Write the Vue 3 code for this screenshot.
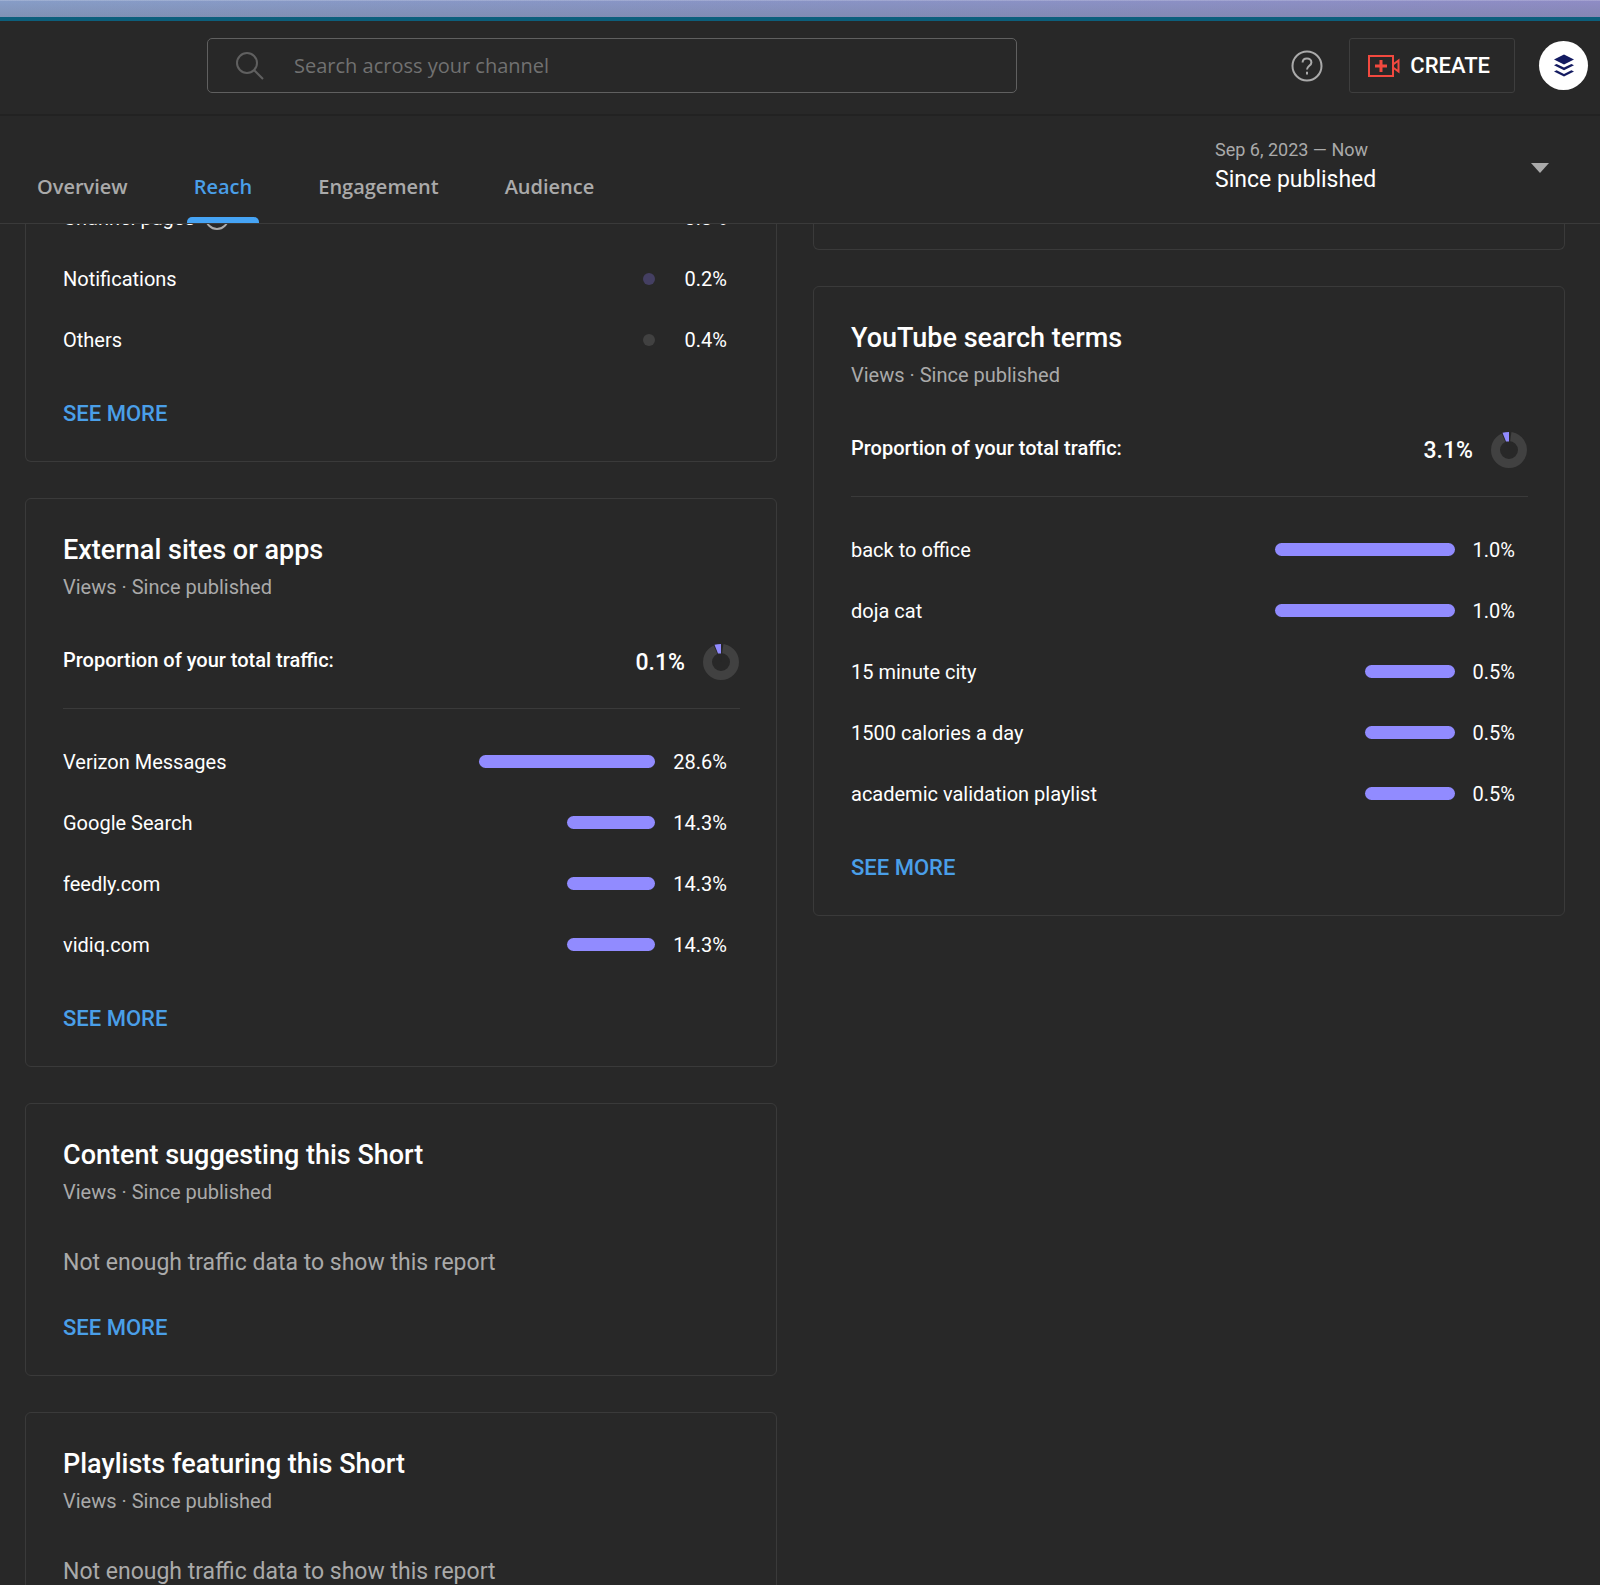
<script setup>
import { ref } from "vue";

const tabs = ["Overview", "Reach", "Engagement", "Audience"];
const activeTab = ref("Reach");
const query = ref("");

const trafficSources = [
  { label: "Channel pages", value: "0.3%", color: "#4f4a78", info: true },
  { label: "Notifications", value: "0.2%", color: "#443f62" },
  { label: "Others", value: "0.4%", color: "#414141" },
];

// scale is the share that fills the whole bar track
const leftReports = [
  {
    title: "External sites or apps",
    share: "0.1%",
    scale: 29,
    rows: [
      { label: "Verizon Messages", value: 28.6 },
      { label: "Google Search", value: 14.3 },
      { label: "feedly.com", value: 14.3 },
      { label: "vidiq.com", value: 14.3 },
    ],
  },
  { title: "Content suggesting this Short", rows: [] },
  { title: "Playlists featuring this Short", rows: [] },
];

const rightReports = [
  {
    title: "YouTube search terms",
    share: "3.1%",
    scale: 1,
    rows: [
      { label: "back to office", value: 1 },
      { label: "doja cat", value: 1 },
      { label: "15 minute city", value: 0.5 },
      { label: "1500 calories a day", value: 0.5 },
      { label: "academic validation playlist", value: 0.5 },
    ],
  },
];

const columns = [
  { id: "left", reports: leftReports },
  { id: "right", reports: rightReports },
];

const barWidth = (row, report) => `${(row.value / report.scale) * 100}%`;
</script>

<template>
  <div class="studio">
    <div class="window-strip"></div>

    <header class="topbar">
      <label class="search">
        <svg class="search-icon" viewBox="0 0 28 28" aria-hidden="true">
          <circle cx="11" cy="11" r="10" />
          <path d="M18 18l9 9" />
        </svg>
        <input v-model="query" type="text" placeholder="Search across your channel" aria-label="Search across your channel" />
      </label>
      <div class="actions">
        <button class="help" type="button" aria-label="Help">
          <svg viewBox="0 0 32 32" aria-hidden="true">
            <circle cx="16" cy="16" r="14.5" />
            <path d="M11.6 12.6c0-2.6 1.9-4.2 4.4-4.2s4.4 1.6 4.4 4c0 3.2-4.4 3.5-4.4 7.2" />
            <path d="M16 21.8v2.6" />
          </svg>
        </button>
        <button class="create" type="button">
          <svg viewBox="0 0 32 24" aria-hidden="true">
            <path class="camera" d="M1 2h24v20H1zM25 10.500l5.500-4v11l-5.500-4" />
            <path class="plus" d="M13 6v12M7 12h12" />
          </svg>
          CREATE
        </button>
        <button class="avatar" type="button" aria-label="Account">
          <svg viewBox="0 0 20 24" aria-hidden="true">
            <path d="M10 .5l10 5-10 5-10-5z" />
            <path d="M0 11.2l2.600-1.300 7.400 3.600 7.400-3.600 2.600 1.300-10 5z" />
            <path d="M0 17.6l2.600-1.300 7.400 3.600 7.400-3.600 2.600 1.300-10 5z" />
          </svg>
        </button>
      </div>
    </header>

    <div class="subbar">
      <nav class="tabs">
        <button
          v-for="tab in tabs"
          :key="tab"
          type="button"
          class="tab"
          :class="{ active: tab === activeTab }"
          @click="activeTab = tab"
        >
          {{ tab }}
        </button>
      </nav>
      <button class="period" type="button" aria-haspopup="listbox">
        <span class="period-text">
          <span class="period-range">Sep 6, 2023 — Now</span>
          <span class="period-name">Since published</span>
        </span>
        <svg class="caret" viewBox="0 0 18 10" aria-hidden="true"><path d="M0 0h18l-9 10z" /></svg>
      </button>
    </div>

    <main class="feed">
      <div v-for="column in columns" :key="column.id" class="column">
        <section v-if="column.id === 'left'" class="card continued">
          <table class="rows">
            <tbody>
              <tr v-for="row in trafficSources" :key="row.label">
                <th scope="row">
                  <span class="source">
                    {{ row.label }}
                    <svg v-if="row.info" class="info" viewBox="0 0 24 24" aria-hidden="true">
                      <circle cx="12" cy="12" r="11" />
                      <path d="M12 10v7M12 6v2" />
                    </svg>
                  </span>
                </th>
                <td class="track"><span class="dot" :style="{ background: row.color }"></span></td>
                <td class="value">{{ row.value }}</td>
              </tr>
            </tbody>
          </table>
          <a class="see-more" href="#">SEE MORE</a>
        </section>
        <section v-else class="card continued blank"></section>

        <section v-for="report in column.reports" :key="report.title" class="card">
          <h2>{{ report.title }}</h2>
          <p class="subtitle">Views · Since published</p>
          <template v-if="report.rows.length">
            <div class="proportion">
              <span class="proportion-label">Proportion of your total traffic:</span>
              <span class="share">{{ report.share }}</span>
              <svg class="donut" viewBox="0 0 36 36" aria-hidden="true">
                <circle cx="18" cy="18" r="13.5" />
                <path class="gap" d="M18 18L9.500 -1H20.500z" />
                <path class="slice" d="M11.500 .8Q14.500 0 18 0V9.500H15z" />
              </svg>
            </div>
            <table class="rows">
              <tbody>
                <tr v-for="row in report.rows" :key="row.label">
                  <th scope="row">{{ row.label }}</th>
                  <td class="track"><span class="bar" :style="{ width: barWidth(row, report) }"></span></td>
                  <td class="value">{{ row.value.toFixed(1) }}%</td>
                </tr>
              </tbody>
            </table>
          </template>
          <p v-else class="empty">Not enough traffic data to show this report</p>
          <a class="see-more" href="#">SEE MORE</a>
        </section>
      </div>
    </main>
  </div>
</template>

<style>
body {
  margin: 0;
  background: #282828;
}
</style>

<style scoped>
.studio {
  display: flex;
  flex-direction: column;
  height: 100vh;
  overflow: hidden;
  background: #282828;
  color: #fff;
  font-family: Roboto, "Liberation Sans", sans-serif;
  font-size: 20px;
}

.studio * {
  box-sizing: border-box;
}

button,
input {
  padding: 0;
  border: 0;
  background: none;
  color: inherit;
  font: inherit;
}

svg {
  flex: none;
  fill: none;
}

.window-strip {
  flex: none;
  height: 21px;
  border-bottom: 4px solid #0c5f7c;
  background:
    linear-gradient(#ffffff30 1px, transparent 1px),
    linear-gradient(transparent, #6f7a8a50),
    linear-gradient(90deg, #879dc8, #8a93c6 55%, #8f8cc6);
}

.topbar {
  display: flex;
  flex: none;
  align-items: center;
  justify-content: space-between;
  height: 95px;
  padding: 0 12px 4px 207px;
  border-bottom: 2px solid #222;
}

.search {
  display: flex;
  flex: 0 1 810px;
  align-items: center;
  height: 55px;
  padding: 0 28px;
  gap: 30px;
  border: 1px solid #606060;
  border-radius: 5px;
}

.search-icon {
  width: 28px;
  height: 28px;
  stroke: #606060;
  stroke-width: 2;
}

.search input {
  flex: 1;
  outline: none;
  font-family: "Open Sans", Roboto, sans-serif;
  font-weight: 500;
}

.search input::placeholder {
  color: #717171;
  opacity: 1;
}

.actions {
  display: flex;
  align-items: center;
}

.help svg {
  display: block;
  width: 32px;
  height: 32px;
  stroke: #aaa;
  stroke-width: 2;
}

.create {
  display: flex;
  align-items: center;
  height: 55px;
  margin: 0 24px 0 26px;
  padding: 0 24px 0 18px;
  gap: 10px;
  border: 1px solid #3e3e3e;
  border-radius: 3px;
  font-size: 22px;
  font-weight: 500;
}

.create svg {
  width: 32px;
  height: 24px;
  stroke: #f2493f;
}

.camera {
  stroke-width: 2;
}

.plus {
  stroke-width: 3;
}

.avatar {
  display: flex;
  align-items: center;
  justify-content: center;
  width: 49px;
  height: 49px;
  border-radius: 50%;
  background: #fff;
}

.avatar svg {
  width: 20px;
  height: 24px;
  fill: #141b61;
}

.subbar {
  display: flex;
  flex: none;
  justify-content: space-between;
  height: 108px;
  padding: 0 51px 0 30px;
  border-bottom: 1px solid #3a3a3a;
}

.tabs {
  display: flex;
  align-items: flex-end;
  gap: 52px;
}

.tab {
  position: relative;
  height: 74px;
  padding: 0 7px;
  color: #aaa;
  font-family: "Open Sans", Roboto, sans-serif;
  font-weight: 600;
}

.tab.active {
  color: #4a9fe8;
}

.tab.active::after {
  content: "";
  position: absolute;
  right: 0;
  bottom: 0;
  left: 0;
  height: 6px;
  border-radius: 5px 5px 0 0;
  background: #46a4f5;
}

.period {
  display: flex;
  align-items: center;
  justify-content: space-between;
  width: 334px;
  padding-bottom: 3px;
  text-align: left;
}

.period-text {
  display: flex;
  flex-direction: column;
  padding-bottom: 7px;
}

.period-range {
  color: #aaa;
  font-size: 18px;
  line-height: 30px;
}

.period-name {
  font-size: 23px;
  line-height: 30px;
}

.caret {
  width: 18px;
  height: 10px;
  fill: #aaa;
}

.feed {
  display: flex;
  flex: 1;
  align-items: flex-start;
  min-height: 0;
  padding: 0 35px 0 25px;
  gap: 36px;
  overflow: hidden;
}

/* the list is scrolled part of the way under the tab bar */
.column {
  display: flex;
  flex: 1;
  flex-direction: column;
  min-width: 0;
  margin-top: -37px;
  gap: 36px;
}

.card {
  padding: 35px 36px 35px 37px;
  border: 1px solid #3a3a3a;
  border-radius: 6px;
}

.continued {
  padding-top: 0;
  border-top: 0;
  border-radius: 0 0 6px 6px;
}

.blank {
  height: 63px;
}

h2 {
  margin: 0;
  font-size: 27px;
  font-weight: 500;
  line-height: 32px;
}

.subtitle {
  margin: 8px 0 0;
  color: #aaa;
  line-height: 26px;
}

.proportion {
  display: flex;
  align-items: center;
  margin: 44px 0 22px;
  padding: 0 1px 28px 0;
  gap: 18px;
  border-bottom: 1px solid #3a3a3a;
}

.proportion-label {
  flex: 1;
  padding-bottom: 4px;
  font-weight: 500;
}

.share {
  font-size: 23px;
  font-weight: 500;
}

.donut {
  width: 36px;
  height: 36px;
  stroke: #414141;
  stroke-width: 9;
}

.donut .gap {
  fill: #282828;
  stroke: none;
}

.donut .slice {
  fill: #918bff;
  stroke: none;
}

.rows {
  width: 100%;
  padding-right: 13px;
  border-spacing: 0;
}

.rows tr {
  height: 61px;
}

.rows th,
.rows td {
  padding: 0;
  font-weight: 400;
  text-align: left;
}

.rows .track {
  width: 27%;
}

.bar,
.dot {
  display: block;
  margin-left: auto;
  border-radius: 8px;
}

.bar {
  height: 13px;
  background: #918bff;
}

.dot {
  width: 12px;
  height: 12px;
  margin-right: 12px;
}

.rows .value {
  width: 1px;
  padding-left: 18px;
  text-align: right;
  white-space: nowrap;
}

.source {
  display: flex;
  align-items: center;
  gap: 10px;
}

.info {
  width: 24px;
  height: 24px;
  stroke: #aaa;
  stroke-width: 2;
}

.empty {
  margin: 44px 0 39px;
  color: #aaa;
  font-size: 23px;
  line-height: 28px;
}

.see-more {
  display: block;
  width: max-content;
  color: #4a9fe8;
  font-size: 22px;
  font-weight: 500;
  line-height: 24px;
  text-decoration: none;
}

.rows + .see-more {
  margin-top: 32px;
}
</style>
